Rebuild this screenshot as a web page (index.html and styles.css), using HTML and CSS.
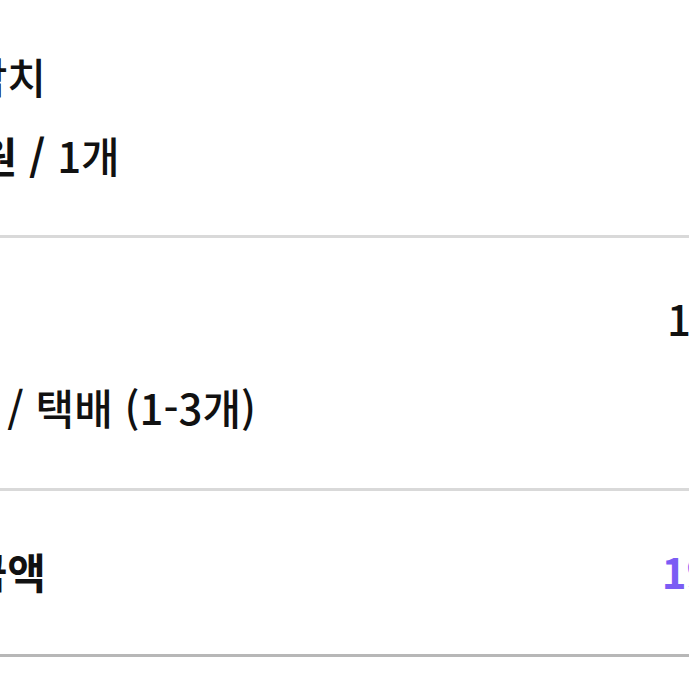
FILE: index.html
```html
<!DOCTYPE html>
<html lang="ko">
<head>
    <meta charset="UTF-8">
    <meta name="viewport" content="width=device-width, initial-scale=1.0">
    <title>주문 요약</title>
    <link rel="stylesheet" href="styles.css">
</head>
<body>
    <div class="sheet">
        <!-- 상품 정보 -->
        <div class="section item">
            <div class="line">국내산 참치</div>
            <div class="line gap-sm"><b>19,800원 /</b> 1개</div>
        </div>

        <!-- 금액 / 배송 -->
        <div class="section delivery">
            <div class="row">
                <span>상품금액</span>
                <span class="value">16,800원</span>
            </div>
            <div class="line gap-md">무료배송 / 택배 (1-3개)</div>
        </div>

        <!-- 합계 -->
        <div class="section total">
            <div class="row">
                <b>총 결제금액</b>
                <b class="value price">19,800원</b>
            </div>
        </div>
    </div>
</body>
</html>
```

FILE: styles.css
```css
body {
    margin: 0;
    background-color: #ffffff;
    overflow: hidden;
    font-family: "Noto Sans CJK KR", "Noto Sans", sans-serif;
    color: #111111;
}

.sheet {
    width: 997px;
    margin-left: -159px;
}

.section {
    padding: 55px 0;
    border-bottom: 3px solid #d9d9d9;
}

.item {
    padding-top: 51px;
}

.delivery {
    padding-bottom: 56px;
}

.total {
    padding-bottom: 58px;
    border-bottom-color: #b7b7b7;
}

.line,
.row {
    font-size: 42px;
    font-weight: 500;
    line-height: 50px;
}

.row {
    display: flex;
    justify-content: space-between;
}

.gap-sm {
    margin-top: 29px;
}

.gap-md {
    margin-top: 39px;
}

b {
    font-weight: 700;
}

.price {
    color: #7b5cf4;
}
```
